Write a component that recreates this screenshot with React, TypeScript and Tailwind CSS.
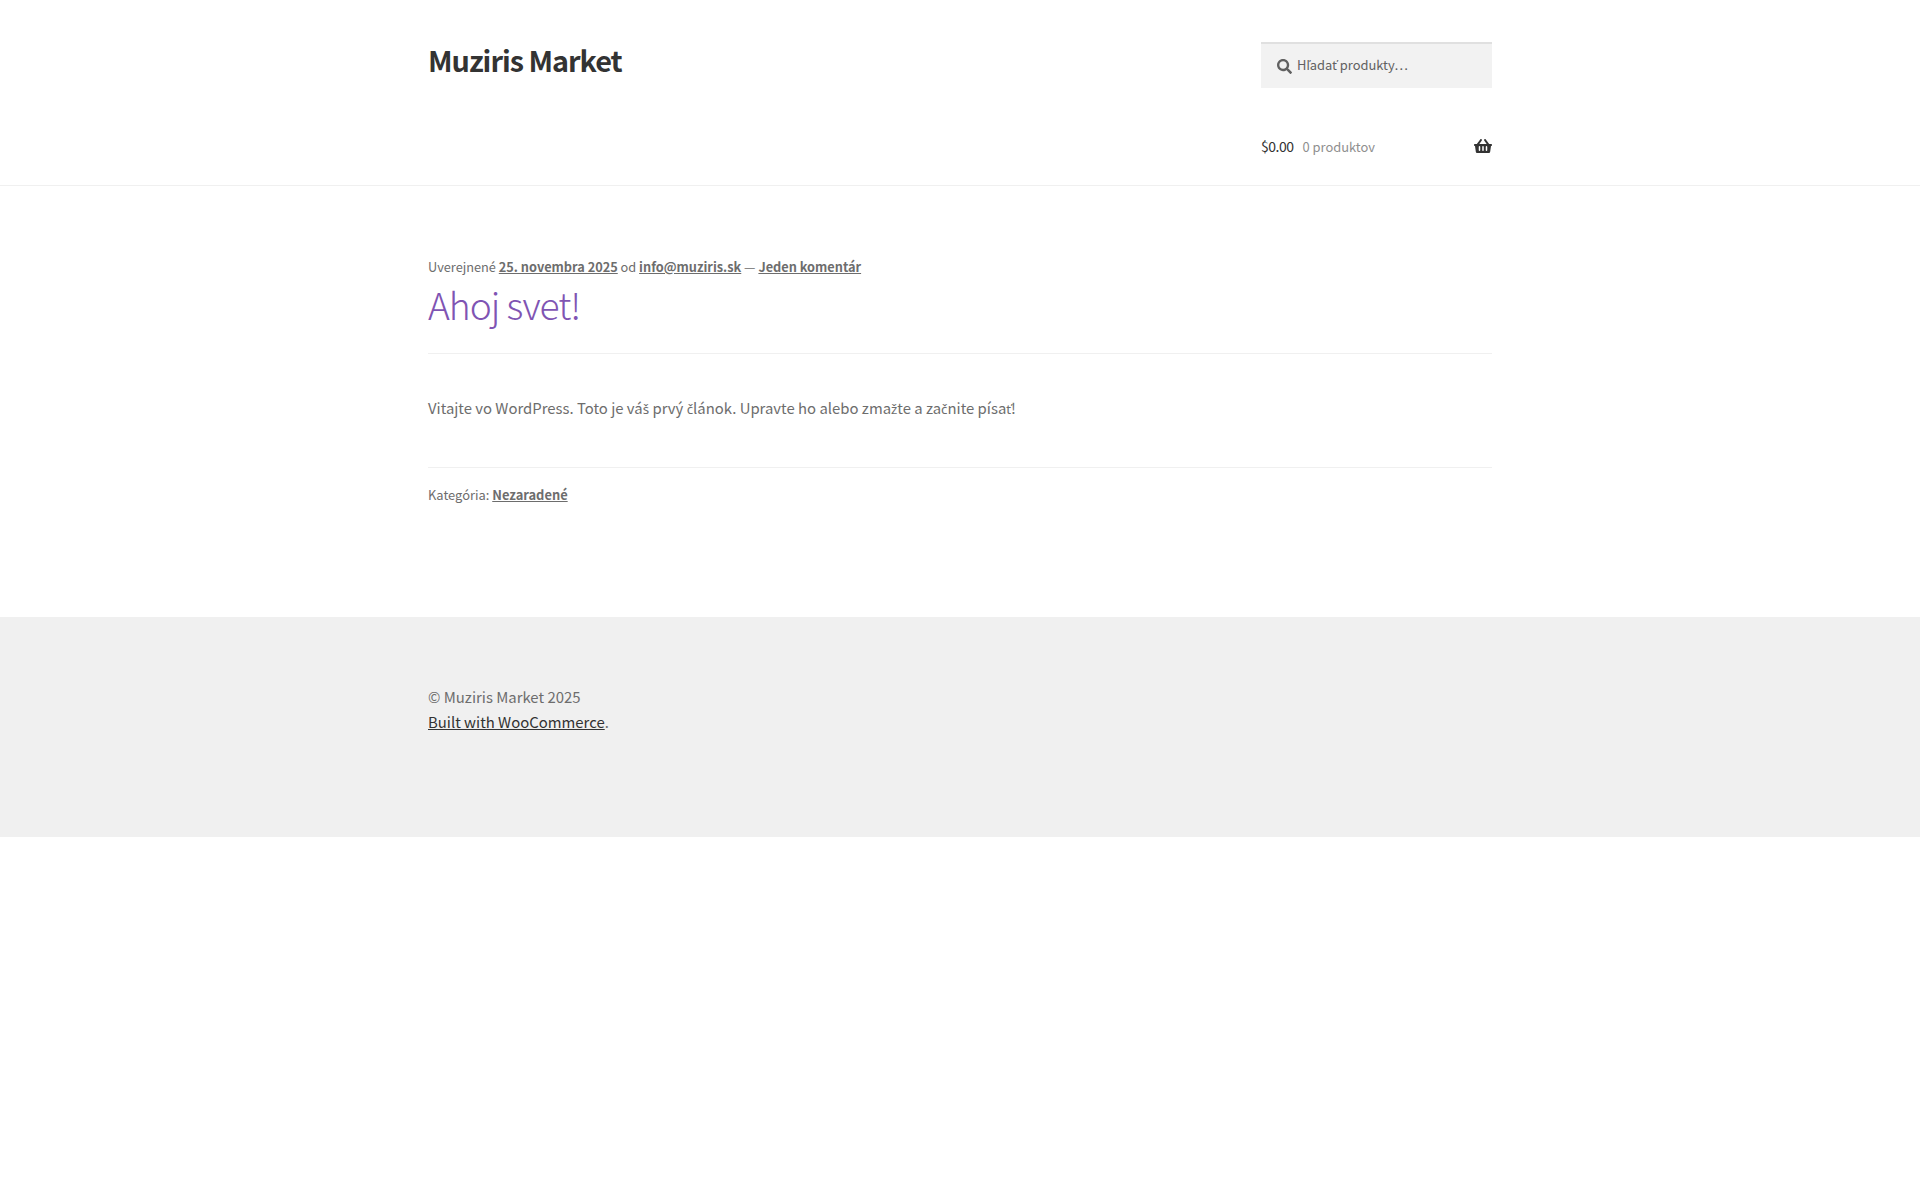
import React from "react";

function Search() {
  return (
    <svg viewBox="0 0 512 512" className="w-[15px] h-[15px] fill-[#616161]">
      <path d="M505 442.700L405.300 343c-4.500-4.500-10.600-7-17-7H372c27.600-35.300 44-79.700 44-128C416 93.100 322.900 0 208 0S0 93.100 0 208s93.100 208 208 208c48.300 0 92.700-16.400 128-44v16.300c0 6.400 2.500 12.500 7 17l99.700 99.700c9.400 9.400 24.600 9.400 33.900 0l28.300-28.300c9.400-9.400 9.400-24.600.1-34zM208 336c-70.700 0-128-57.200-128-128 0-70.700 57.200-128 128-128 70.700 0 128 57.200 128 128 0 70.700-57.200 128-128 128z" />
    </svg>
  );
}

function Basket() {
  return (
    <svg viewBox="0 0 576 512" className="w-[18px] h-[16px] fill-[#333333]">
      <path d="M576 216v16c0 13.300-10.700 24-24 24h-8l-26.100 182.800C514.500 462.400 494.200 480 470.300 480H105.700c-23.900 0-44.200-17.600-47.500-41.200L32 256h-8c-13.300 0-24-10.700-24-24v-16c0-13.300 10.700-24 24-24h67.300l106.800-146.800c10.400-14.300 30.400-17.500 44.700-7.100 14.300 10.400 17.500 30.400 7.100 44.700L170.400 192h235.200L326.100 82.800c-10.400-14.300-7.200-34.300 7.100-44.700 14.300-10.400 34.300-7.200 44.700 7.100L484.700 192H552c13.300 0 24 10.700 24 24zM312 392V280c0-13.300-10.700-24-24-24s-24 10.700-24 24v112c0 13.300 10.700 24 24 24s24-10.700 24-24zm112 0V280c0-13.300-10.700-24-24-24s-24 10.700-24 24v112c0 13.300 10.700 24 24 24s24-10.700 24-24zm-224 0V280c0-13.300-10.700-24-24-24s-24 10.700-24 24v112c0 13.300 10.700 24 24 24s24-10.700 24-24z" />
    </svg>
  );
}

function X({ children }: { children: React.ReactNode }) {
  return <span className="font-['Noto_Sans',sans-serif] text-[0.9em] leading-[0]">{children}</span>;
}

function Y({ children }: { children: React.ReactNode }) {
  return <span className="font-['Noto_Sans',sans-serif] text-[1em] leading-[0]">{children}</span>;
}

export default function App() {
  return (
    <div className="min-h-[1200px] bg-white text-[#6d6d6d] text-[14.88px] leading-[25px] font-['Noto_Sans_CJK_SC','Noto_Sans',sans-serif]">
      <header className="border-b border-[#f0f0f0] h-[186px]">
        <div className="w-[1064px] mx-auto flex justify-between">
          <div className="pt-[40px] text-[28.8px] leading-[40px] font-semibold tracking-[-1px] text-[#333333]">Muziris Market</div>
          <div className="w-[231px] pt-[42px]">
            <div className="h-[46px] bg-[#f2f2f2] border-t-2 border-[#e0e0e0] flex items-center pl-4 gap-[5px] text-[12.9px] text-[#616161]">
              <Search />
              <span className="-mt-[3px]">H<Y>ľ</Y>ada<Y>ť</Y> produkty…</span>
            </div>
            <div className="mt-[46px] flex items-center h-[24px] text-[12.9px]">
              <span className="text-[14px] text-[#333333] tracking-[-0.5px]">$0.00</span>
              <span className="ml-[9px] text-[#8f8f8f]">0 produktov</span>
              <span className="ml-auto"><Basket /></span>
            </div>
          </div>
        </div>
      </header>
      <main className="w-[1064px] mx-auto h-[431px] pt-[69px]">
        <div className="text-[12.75px] leading-[24px]">
          Uverejnené <a className="font-semibold underline">25. novembra 2025</a> od <a className="font-semibold underline">info@muziris.sk</a> — <a className="font-semibold underline">Jeden komentár</a>
        </div>
        <h1 className="text-[37.2px] leading-[50px] font-light tracking-[-1px] text-[#7f54b3] pb-[24px] border-b border-[#f0f0f0]">Ahoj svet!</h1>
        <p className="mt-[41px]">Vitajte vo WordPress. Toto je vá<X>š</X> prvý <X>č</X>lánok. Upravte ho alebo zma<X>ž</X>te a za<X>č</X>nite písa<X>ť</X>!</p>
        <div className="mt-[47px] border-t border-[#f0f0f0] pt-[15px] text-[12.9px] leading-[24px]">
          Kategória: <a className="font-semibold underline">Nezaradené</a>
        </div>
      </main>
      <footer className="bg-[#f0f0f0] h-[220px] pt-[67px] text-[14.9px]">
        <div className="w-[1064px] mx-auto">
          <div>© Muziris Market 2025</div>
          <div><a className="underline text-[#333333]">Built with WooCommerce</a>.</div>
        </div>
      </footer>
    </div>
  );
}
